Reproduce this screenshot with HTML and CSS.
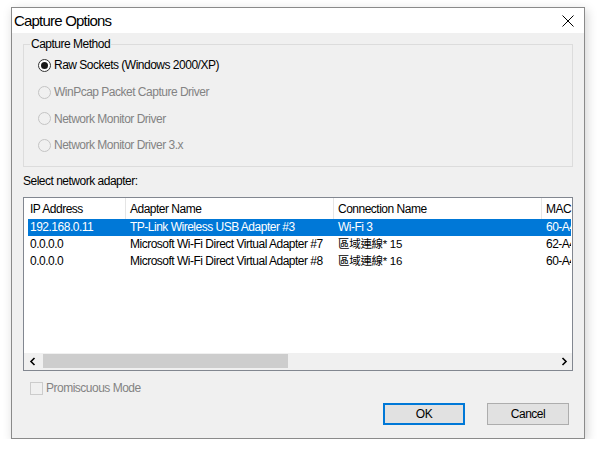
FILE: index.html
```html
<!DOCTYPE html>
<html>
<head>
<meta charset="utf-8">
<link rel="stylesheet" href="styles.css">
</head>
<body>
<div class="window">
  <div class="titlebar">
    <span class="title">Capture Options</span>
    <svg class="close" width="12" height="12" viewBox="0 0 12 12"><path d="M0.5 0.5 L11.5 11.5 M11.5 0.5 L0.5 11.5" stroke="#000" stroke-width="1" fill="none"/></svg>
  </div>
  <div class="content">
    <fieldset class="group">
      <legend>Capture Method</legend>
      <div class="radio on"><span class="circle"></span><span>Raw Sockets (Windows 2000/XP)</span></div>
      <div class="radio off"><span class="circle"></span><span>WinPcap Packet Capture Driver</span></div>
      <div class="radio off"><span class="circle"></span><span>Network Monitor Driver</span></div>
      <div class="radio off"><span class="circle"></span><span>Network Monitor Driver 3.x</span></div>
    </fieldset>
    <div class="label">Select network adapter:</div>
    <div class="list">
      <div class="header">
        <div class="hcell">IP Address</div>
        <div class="hcell">Adapter Name</div>
        <div class="hcell">Connection Name</div>
        <div class="hcell last">MAC Address</div>
      </div>
      <div class="rows">
        <div class="row selected"><span>192.168.0.11</span><span>TP-Link Wireless USB Adapter #3</span><span>Wi-Fi 3</span><span>60-A4-B7-1C-22-3E</span></div>
        <div class="row"><span>0.0.0.0</span><span>Microsoft Wi-Fi Direct Virtual Adapter #7</span><span class="cjk">區域連線* 15</span><span>62-A4-B7-1C-22-3E</span></div>
        <div class="row"><span>0.0.0.0</span><span>Microsoft Wi-Fi Direct Virtual Adapter #8</span><span class="cjk">區域連線* 16</span><span>60-A4-B7-1C-22-3E</span></div>
      </div>
      <div class="hscroll">
        <div class="arrow"><svg width="8" height="9" viewBox="0 0 8 9"><path d="M5.5 1 L2 4.5 L5.5 8" stroke="#000" stroke-width="1.6" fill="none"/></svg></div>
        <div class="track"><div class="thumb"></div></div>
        <div class="arrow"><svg width="8" height="9" viewBox="0 0 8 9"><path d="M2.5 1 L6 4.5 L2.5 8" stroke="#000" stroke-width="1.6" fill="none"/></svg></div>
      </div>
    </div>
    <div class="check"><span class="box"></span><span>Promiscuous Mode</span></div>
    <div class="buttons">
      <div class="btn default">OK</div>
      <div class="btn">Cancel</div>
    </div>
  </div>
</div>
</body>
</html>
```
FILE: styles.css
```css
html, body {
  margin: 0;
  padding: 0;
  background: #ffffff;
}
body {
  font-family: "Liberation Sans", Arial, "Noto Sans CJK TC", sans-serif;
  font-size: 12px;
  letter-spacing: -0.5px;
  color: #000;
}
.window {
  margin: 7px 0 0 11px;
  width: 574px;
  height: 432px;
  box-sizing: border-box;
  border: 1px solid #8a8a8a;
  background: #f0f0f0;
  box-shadow: 2px 3px 10px rgba(0,0,0,0.18);
  display: flex;
  flex-direction: column;
}
.titlebar {
  height: 25px;
  background: #fff;
  display: flex;
  align-items: center;
  justify-content: space-between;
  padding: 0 10px 0 2px;
  flex: none;
}
.title {
  font-size: 15px;
  letter-spacing: -0.8px;
  line-height: 25px;
}
.close { display: block; margin-top: 1px; }
.content {
  flex: 1;
  padding: 4px 11px 0 11px;
  display: flex;
  flex-direction: column;
}
.group {
  margin: 0;
  border: 1px solid #dcdcdc;
  padding: 1px 0 10px 14px;
  height: 130px;
  box-sizing: border-box;
}
.group legend {
  padding: 0 1px;
  margin-left: -8px;
  line-height: 14px;
}
.radio {
  display: flex;
  align-items: center;
  height: 26.7px;
  gap: 3px;
}
.circle {
  width: 13px;
  height: 13px;
  border-radius: 50%;
  box-sizing: border-box;
  border: 1px solid #333;
  background: #fff;
  position: relative;
  flex: none;
}
.radio.on .circle::after {
  content: "";
  position: absolute;
  left: 2px; top: 2px;
  width: 7px; height: 7px;
  border-radius: 50%;
  background: #1a1a1a;
}
.radio.off { color: #838383; }
.radio.off .circle { border-color: #c4c4c4; background: transparent; }
.label {
  margin-top: 7px;
  line-height: 14px;
  height: 16px;
}
.list {
  margin-top: 7px;
  height: 174px;
  box-sizing: border-box;
  border: 1px solid #828790;
  background: #fff;
  display: flex;
  flex-direction: column;
  overflow: hidden;
}
.header {
  display: grid;
  grid-template-columns: 102px 208px 208px 1fr;
  height: 21px;
  flex: none;
}
.hcell {
  border-right: 1px solid #e5e5e5;
  padding-left: 4px;
  line-height: 22px;
  white-space: nowrap;
  overflow: hidden;
}
.hcell:first-child { padding-left: 6px; }
.hcell.last { border-right: none; }
.rows { flex: 1; padding: 0 1px 0 4px; }
.row {
  display: grid;
  grid-template-columns: 98px 208px 208px 1fr;
  height: 17px;
  line-height: 17px;
  white-space: nowrap;
  overflow: hidden;
}
.row span { padding-left: 4px; overflow: hidden; }
.row span:first-child { padding-left: 2px; }
.row.selected { background: #0078d7; color: #fff; }
.cjk { font-family: "Liberation Sans", "Noto Sans CJK TC", sans-serif; font-size: 11.5px; letter-spacing: -0.3px; }
.hscroll {
  height: 17px;
  flex: none;
  display: flex;
  background: #f0f0f0;
}
.arrow {
  width: 17px;
  display: flex;
  align-items: center;
  justify-content: center;
}
.track { flex: 1; padding: 0 267px 2px 2px; display: flex; }
.thumb { flex: 1; background: #cdcdcd; margin-top: 1px; }
.check {
  margin-top: 9px;
  margin-left: 7px;
  display: flex;
  align-items: center;
  gap: 3px;
  color: #838383;
  height: 16px;
}
.box {
  width: 13px;
  height: 13px;
  box-sizing: border-box;
  border: 1px solid #cccccc;
}
.buttons {
  margin-top: 7px;
  display: flex;
  justify-content: flex-end;
  gap: 22px;
  padding-right: 4px;
}
.btn {
  width: 82px;
  height: 22px;
  box-sizing: border-box;
  border: 1px solid #adadad;
  background: #e1e1e1;
  display: flex;
  align-items: center;
  justify-content: center;
}
.btn.default { border: 2px solid #0078d7; }
```
